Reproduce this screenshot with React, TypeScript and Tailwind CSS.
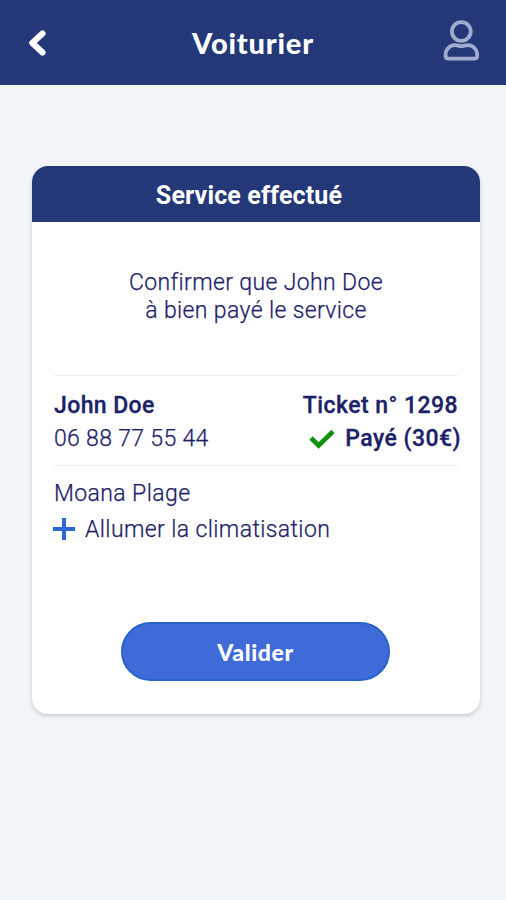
function BackIcon() {
  return (
    <svg className="block h-[30px] w-[22px]" viewBox="0 0 22 30" fill="none" aria-hidden="true">
      <path d="M16.500 5.500 6.300 15l10.200 9.500" stroke="#fff" strokeWidth="6.200" strokeLinejoin="round" strokeLinecap="round" />
    </svg>
  );
}

function UserIcon() {
  return (
    <svg className="block h-[44px] w-[38px]" viewBox="0 0 38 44" fill="none" stroke="#a0acce" strokeWidth="3.800" aria-hidden="true">
      <circle cx="19.300" cy="12.500" r="9.400" />
      <path d="M13.300 26.200C7.400 26.200 3.600 30.500 3.600 35.800V37Q3.600 39.600 6.400 39.600H32.300Q35.100 39.600 35.100 37V35.800C35.100 30.500 31.300 26.200 25.400 26.200C23 26.200 22 27.200 19.300 27.200S15.700 26.200 13.300 26.200Z" />
    </svg>
  );
}

export default function App() {
  return (
    <div className="flex h-[900px] w-full flex-col bg-[#f2f6f8] font-['Roboto',sans-serif] text-[23px] text-[#1c2268]">
      <header className="grid h-[84.500px] shrink-0 grid-cols-[1fr_auto_1fr] items-center bg-[#243878] px-[26px]">
        <button type="button" aria-label="Retour" className="mt-0.5 justify-self-start">
          <BackIcon />
        </button>
        <h1 className="mt-px font-['Lato',sans-serif] text-[29px] leading-8 font-black tracking-[0.800px] text-white">Voiturier</h1>
        <button type="button" aria-label="Profil" className="-mt-[3px] justify-self-end">
          <UserIcon />
        </button>
      </header>

      <main className="mt-[81.500px] ml-8 flex h-[548px] w-[448px] flex-col overflow-hidden rounded-2xl bg-white shadow-[0_2px_4px_rgba(0,0,0,0.18)]">
        <h2 className="h-[56px] shrink-0 bg-[#243878] pr-[14px] text-center text-[25px] leading-[59px] font-bold tracking-[0.150px] text-white">
          Service effectué
        </h2>
        <p className="mt-[47px] text-center leading-7 font-light tracking-[0.370px] [-webkit-text-stroke:0.25px]">
          Confirmer que John Doe
          <br />à bien payé le service
        </p>

        <section className="mx-[22px] mt-[50px] flex h-[91px] justify-between border-y border-[#eceef1] pt-[13px]">
          <div>
            <p className="pt-px leading-8 font-medium tracking-[0.400px] [-webkit-text-stroke:0.3px]">John Doe</p>
            <p className="leading-[33px] font-light tracking-[0.330px] [-webkit-text-stroke:0.25px]">06 88 77 55 44</p>
          </div>
          <div className="-mr-[3px]">
            <p className="mr-[3px] pt-px text-right leading-8 font-medium tracking-[0.450px] [-webkit-text-stroke:0.3px]">Ticket n° 1298</p>
            <p className="flex items-center justify-end gap-[10px] leading-[33px] font-medium tracking-[0.450px] [-webkit-text-stroke:0.3px]">
              <svg className="block h-[22px] w-[26px]" viewBox="0 0 26 22" fill="none" aria-hidden="true">
                <path d="M2 10 9.600 17.500 24 3.500" stroke="#109210" strokeWidth="4.600" />
              </svg>
              Payé (30€)
            </p>
          </div>
        </section>

        <section className="mx-[22px] mt-[10px] font-light tracking-[0.400px] [-webkit-text-stroke:0.25px]">
          <p className="leading-9">Moana Plage</p>
          <p className="flex items-center gap-[10px] leading-9">
            <svg className="-mt-0.5 -ml-px block size-[22px]" viewBox="0 0 22 22" aria-hidden="true">
              <path d="M11 0v22M0 11h22" stroke="#2c69d5" strokeWidth="4" />
            </svg>
            Allumer la climatisation
          </p>
        </section>

        <button type="button" className="mt-[74px] ml-[89px] h-[59px] w-[269px] shrink-0 rounded-full border-2 border-[#2763c9] bg-[#3f6bd8] pt-px font-['Lato',sans-serif] text-[23px] font-black tracking-[0.600px] text-white">
          Valider
        </button>
      </main>
    </div>
  );
}
